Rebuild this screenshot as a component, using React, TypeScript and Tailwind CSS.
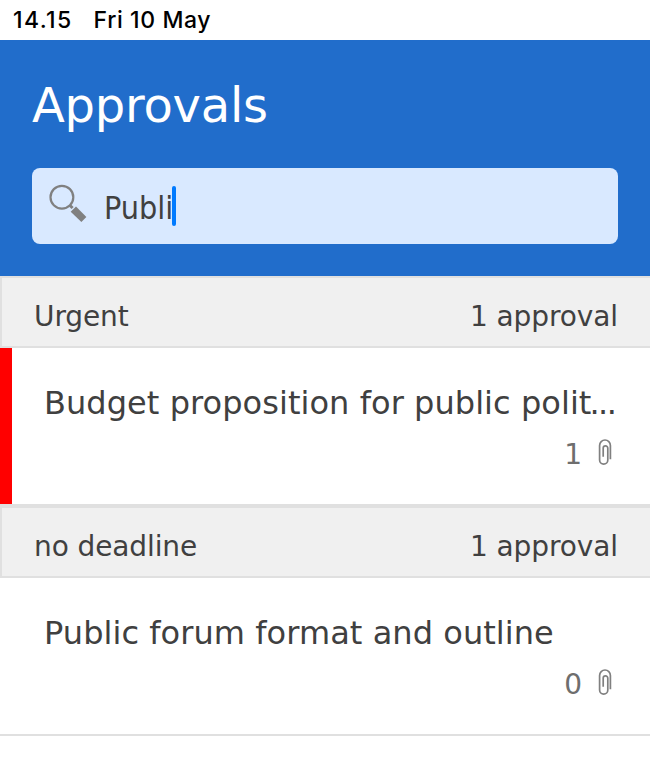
interface Approval {
  title: string;
  attachments: number;
  truncated?: boolean;
  urgent?: boolean;
}

interface ApprovalGroup {
  label: string;
  count: string;
  items: Approval[];
}

const groups: ApprovalGroup[] = [
  {
    label: 'Urgent',
    count: '1 approval',
    items: [
      { title: 'Budget proposition for public polit', attachments: 1, truncated: true, urgent: true },
    ],
  },
  {
    label: 'no deadline',
    count: '1 approval',
    items: [{ title: 'Public forum format and outline', attachments: 0 }],
  },
];

function SearchIcon() {
  return (
    <svg className="mb-[2px] h-[42px] w-[38px] shrink-0" viewBox="0 0 38 42" fill="none">
      <circle cx="12.9" cy="13.2" r="11.4" stroke="#808080" strokeWidth="2.2" />
      <path d="M20.8 21.2l2.8 2.8" stroke="#808080" strokeWidth="3" />
      <path d="M27 22.6l10.4 10.4-5 5.1-10.7-10.3z" fill="#808080" />
    </svg>
  );
}

function PaperclipIcon() {
  return (
    <svg className="mt-1 h-[28px] w-[16px]" viewBox="0 0 16 28" fill="none">
      <path
        d="M13.4 21.2V7.4a5.4 5.4 0 0 0-10.8 0v14.6a4.1 4.1 0 0 0 8.2 0V10.2a2.3 2.3 0 0 0-4.6 0v8.6"
        stroke="#808080"
        strokeWidth="1.7"
      />
    </svg>
  );
}

function ApprovalRow({ title, attachments, truncated, urgent }: Approval) {
  return (
    <div className="relative h-[158px] border-b-2 border-[#e0e0e0] bg-white pr-8 pl-11">
      {urgent && <div className="absolute top-0 left-0 h-[156px] w-3 bg-[#ff0000]" />}
      <p className="pt-[35px] text-[32px] leading-10 tracking-[0.06px] whitespace-nowrap text-[#404040]">
        {title}
        {truncated && <span className="-ml-[2px] tracking-[-1.6px]">...</span>}
      </p>
      <div className="mt-[11px] flex items-start justify-end pr-[5px] text-[28px] leading-9 text-[#6e6e6e]">
        <span className="mr-[15px] pt-[3px]">{attachments}</span>
        <PaperclipIcon />
      </div>
    </div>
  );
}

export default function App() {
  return (
    <div className="h-[759px] w-[650px] overflow-hidden bg-white font-['DejaVu_Sans',sans-serif]">
      <div className="flex h-10 items-center gap-[21px] pl-[13px] font-['Inter',sans-serif] text-[23px] font-medium text-black">
        <span className="tracking-[1.4px]">14.15</span>
        <span className="tracking-[0.6px]">Fri 10 May</span>
      </div>

      <header className="h-[236px] bg-[#216dcb] px-8 pt-[35px]">
        <h1 className="text-[48px] leading-[60px] tracking-[-0.25px] text-white">Approvals</h1>
        <div className="mt-[33px] flex h-[76px] items-center rounded-lg bg-[#d9e9ff] pl-[17px]">
          <SearchIcon />
          <span className="ml-[17px] pt-[3px] text-[32px] text-[#404040] font-['DejaVu_Sans_Condensed','DejaVu_Sans',sans-serif]">
            Publi
          </span>
          <span className="-ml-px h-10 w-1 rounded-sm bg-[#007aff]" />
        </div>
      </header>

      {groups.map((group) => (
        <section key={group.label}>
          <div className="flex h-[72px] items-center justify-between border-y-2 border-l-2 border-[#e0e0e0] bg-[#f0f0f0] pt-[10px] pr-8 pl-8 text-[28px] tracking-[-0.1px] text-[#404040]">
            <span>{group.label}</span>
            <span>{group.count}</span>
          </div>
          {group.items.map((item) => (
            <ApprovalRow key={item.title} {...item} />
          ))}
        </section>
      ))}
    </div>
  );
}
